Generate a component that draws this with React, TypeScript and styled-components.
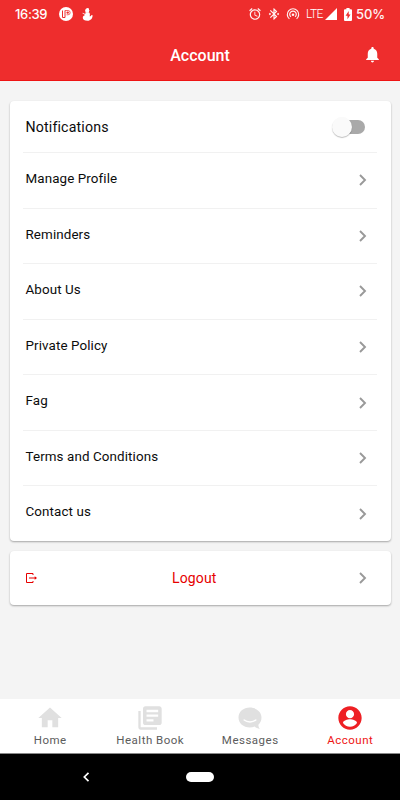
import React from "react";
import styled, { createGlobalStyle } from "styled-components";
import {
  MdAlarm,
  MdBluetoothConnected,
  MdHome,
  MdLibraryBooks,
  MdNotifications,
} from "react-icons/md";

const GlobalStyle = createGlobalStyle`
  * { box-sizing: border-box; }
  body { margin: 0; font-family: Roboto, "Liberation Sans", sans-serif; }
  svg { display: block; flex: none; }
`;

const Screen = styled.div`
  width: 400px;
  height: 800px;
  display: flex;
  flex-direction: column;
  background: #f4f4f4;
  overflow: hidden;
`;

const Top = styled.div`
  height: 81px;
  flex: none;
  background: #ee2d2d;
  border-bottom: 1px solid #ee1414;
  color: #fff;
`;

const StatusBar = styled.div`
  height: 28px;
  display: flex;
  align-items: center;
  padding: 0 15px 0 15px;
  font: 500 13px/28px Inter, Roboto, sans-serif;
`;

const Clock = styled.span`
  width: 44px;
  letter-spacing: -0.35px;
`;

const StatusIcons = styled.div`
  display: flex;
  align-items: center;
  gap: 9px;
`;

const StatusRight = styled.div`
  margin-left: auto;
  display: flex;
  align-items: center;
  color: #fff4f4;
`;

const Gap = styled.span<{ $w: number }>`
  width: ${(p) => p.$w}px;
`;

const Network = styled.span`
  width: 19px;
  font-family: Roboto, sans-serif;
  font-size: 12px;
  font-weight: 300;
  letter-spacing: -0.7px;
  color: #fff;
`;

const Percent = styled.span`
  width: 29px;
  white-space: nowrap;
  letter-spacing: -0.1px;
`;

const TitleBar = styled.header`
  height: 53px;
  display: grid;
  grid-template-columns: 40px 1fr 40px;
  align-items: center;
  padding: 0 8px 0 6px;
`;

const Title = styled.h1`
  grid-column: 2;
  margin: 0;
  padding: 2px 0 0 2px;
  font-size: 16px;
  line-height: 20px;
  font-weight: 500;
  text-align: center;
`;

const BellButton = styled.button`
  border: 0;
  padding: 0;
  background: none;
  color: inherit;
  display: flex;
  justify-content: center;
`;

const Content = styled.main`
  flex: 1;
  padding: 20px 9.5px 0;
  display: flex;
  flex-direction: column;
  gap: 10px;
`;

const Card = styled.section`
  background: #fff;
  border-radius: 4px;
  padding: 0 13.5px;
  box-shadow: 0 1px 2px rgba(0, 0, 0, 0.32);
`;

const Row = styled.div<{ $h?: number }>`
  height: ${(p) => p.$h ?? 55.57}px;
  display: flex;
  align-items: center;
  justify-content: space-between;
  padding: 0 9px 0 2.5px;
  & + & {
    border-top: 1px solid #f1f1f1;
  }
`;

const Label = styled.span<{ $large?: boolean }>`
  font-size: ${(p) => (p.$large ? 14.2 : 13.4)}px;
  letter-spacing: ${(p) => (p.$large ? 0.15 : 0.1)}px;
  line-height: 18px;
  padding-bottom: ${(p) => (p.$large ? 0 : 2.4)}px;
  color: #0c0c0c;
`;

const Track = styled.span`
  width: 29px;
  height: 14px;
  margin-right: 3.5px;
  border-radius: 7px;
  background: #a9a9a9;
  display: flex;
  align-items: center;
`;

const Thumb = styled.span`
  width: 20px;
  height: 20px;
  flex: none;
  margin-left: -4px;
  border-radius: 50%;
  background: #fafafa;
  box-shadow: 0 1px 1px rgba(0, 0, 0, 0.25);
`;

const LogoutLabel = styled.span`
  margin-left: -7px;
  color: #e60000;
  font-size: 14px;
  line-height: 18px;
  letter-spacing: 0.1px;
`;

const TabBar = styled.nav`
  height: 54.5px;
  flex: none;
  background: #fff;
  border-bottom: 1px solid #888;
  display: grid;
  grid-template-columns: repeat(4, 1fr);
`;

const Tab = styled.div<{ $active?: boolean }>`
  display: flex;
  flex-direction: column;
  align-items: center;
  padding-top: 5px;
  color: ${(p) => (p.$active ? "#ee2024" : "#e0e0e0")};
`;

const TabLabel = styled.span<{ $active?: boolean }>`
  margin-top: 1px;
  padding-left: 0.5px;
  font-size: 11.5px;
  line-height: 14px;
  letter-spacing: 0.5px;
  color: ${(p) => (p.$active ? "#ee1414" : "#5c5c5c")};
`;

const SystemNav = styled.div`
  height: 46.5px;
  flex: none;
  background: #000;
  display: grid;
  grid-template-columns: 1fr 28px 1fr;
  align-items: center;
`;

const BackSlot = styled.span`
  padding-left: 80px;
`;

const HomePill = styled.span`
  height: 10px;
  border-radius: 5px;
  background: #fff;
`;

const Chevron = () => (
  <svg width="10" height="14" viewBox="0 0 10 14" fill="none" stroke="#999" strokeWidth="1.9">
    <path d="M2 2 L7 7 L2 12" />
  </svg>
);

const items = [
  "Manage Profile",
  "Reminders",
  "About Us",
  "Private Policy",
  "Fag",
  "Terms and Conditions",
  "Contact us",
];

export default function App() {
  return (
    <>
      <GlobalStyle />
      <Screen>
        <Top>
          <StatusBar>
            <Clock>16:39</Clock>
            <StatusIcons>
              <svg width="14" height="14" viewBox="0 0 14 14">
                <circle cx="7" cy="7" r="7" fill="#fff" />
                <path d="M3.500 3.500V10.500H6V3.500" fill="none" stroke="#ee2d2d" strokeWidth="1" />
                <path d="M6 3.500H9a1.900 1.900 0 0 1 0 4.300H7.500" fill="none" stroke="#ee2d2d" strokeWidth="0.700" />
                <circle cx="8.700" cy="5.600" r="1.200" fill="#ee2d2d" />
              </svg>
              <svg width="11" height="13" viewBox="0 0 11 13" fill="#fff">
                <circle cx="5.200" cy="2.700" r="2.100" />
                <path d="M4.500.3 6.500 0 7.300 3 4.500 3.200ZM3.600 4.300h3.200c1.400 1 1.300 2.700.8 3.900.9.200 1.600-.4 1.900-1.200l1.100.3c0 3.200-2 5.500-5.100 5.500C2.600 12.800.8 11.500.8 9.700c0-1.500 1-2.400 2.300-2.800L.4 5.300.7 4.700l2.600 1.200Z" />
              </svg>
            </StatusIcons>
            <StatusRight>
              <MdAlarm size={14} />
              <Gap $w={5} />
              <MdBluetoothConnected size={14} />
              <Gap $w={5} />
              <svg width="14" height="14" viewBox="0 0 14 14" fill="none" stroke="currentColor" strokeWidth="1.150">
                <path d="M3.400 11.900a5.700 5.700 0 1 1 7.200 0M4.900 9.900a3.300 3.300 0 1 1 4.200 0" />
                <circle cx="7" cy="7.700" r="1.300" fill="currentColor" stroke="none" />
              </svg>
              <Gap $w={6} />
              <Network>LTE</Network>
              <svg width="12" height="12" viewBox="0 0 12 12" fill="#fff">
                <path d="M12 0V12H0Z" />
              </svg>
              <Gap $w={7} />
              <svg width="8" height="13" viewBox="0 0 8 13">
                <path d="M2.400 0h3.200v1.200H7a1 1 0 0 1 1 1V12a1 1 0 0 1-1 1H1a1 1 0 0 1-1-1V2.200a1 1 0 0 1 1-1h1.400Z" fill="#fff" />
                <path d="M4.700 3 1.600 7.700h1.900V11.200l3-4.800H4.700Z" fill="#ee2d2d" />
              </svg>
              <Gap $w={4} />
              <Percent>50%</Percent>
            </StatusRight>
          </StatusBar>
          <TitleBar>
            <Title>Account</Title>
            <BellButton aria-label="Notifications">
              <MdNotifications size={19} />
            </BellButton>
          </TitleBar>
        </Top>
        <Content>
          <Card>
            <Row $h={51}>
              <Label $large>Notifications</Label>
              <Track>
                <Thumb />
              </Track>
            </Row>
            {items.map((item) => (
              <Row key={item}>
                <Label>{item}</Label>
                <Chevron />
              </Row>
            ))}
          </Card>
          <Card>
            <Row $h={54}>
              <svg width="12" height="10" viewBox="0 0 12 10" fill="none" stroke="#e60000">
                <path d="M7 2V.5H.5V9.500H7V8M3 5h7" />
                <path d="M8.700 3.300 11 5 8.700 6.700Z" fill="#e60000" stroke="none" />
              </svg>
              <LogoutLabel>Logout</LogoutLabel>
              <Chevron />
            </Row>
          </Card>
        </Content>
        <TabBar>
          <Tab>
            <MdHome size={28} />
            <TabLabel>Home</TabLabel>
          </Tab>
          <Tab>
            <MdLibraryBooks size={28} />
            <TabLabel>Health Book</TabLabel>
          </Tab>
          <Tab>
            <svg width="28" height="28" viewBox="0 0 28 28">
              <path d="M13.800 3.500C7.400 3.500 2.500 7.800 2.500 13.500s4.900 10 11.300 10c1.800 0 3.400-.3 4.900-.9 1.400 1.300 3 2.200 5.100 2.300-1-1.200-1.500-2.700-1.400-4.200 2-1.800 3.100-4.200 3.100-7.200 0-5.700-5.300-10-11.700-10Z" fill="currentColor" />
              <path d="M8.200 16c3 2.500 8.600 2.500 11.600 0" fill="none" stroke="#fff" strokeWidth="1.500" strokeLinecap="round" />
            </svg>
            <TabLabel>Messages</TabLabel>
          </Tab>
          <Tab $active>
            <svg width="28" height="28" viewBox="0 0 24 24" fill="currentColor">
              <path d="M12 2C6.480 2 2 6.480 2 12s4.480 10 10 10 10-4.480 10-10S17.520 2 12 2zm0 3.200c1.900 0 3.500 1.600 3.500 3.500s-1.600 3.500-3.500 3.500-3.500-1.600-3.500-3.500 1.600-3.500 3.500-3.500zm0 14.200c-2.500 0-4.710-1.280-6-3.220.03-1.990 4-3.080 6-3.080 1.990 0 5.970 1.090 6 3.080-1.290 1.940-3.500 3.220-6 3.220z" />
            </svg>
            <TabLabel $active>Account</TabLabel>
          </Tab>
        </TabBar>
        <SystemNav>
          <BackSlot>
            <svg width="12" height="12" viewBox="0 0 12 12" fill="none" stroke="#fff" strokeWidth="1.700">
              <path d="M8.500 1.800 4.300 6l4.200 4.200" />
            </svg>
          </BackSlot>
          <HomePill />
        </SystemNav>
      </Screen>
    </>
  );
}
